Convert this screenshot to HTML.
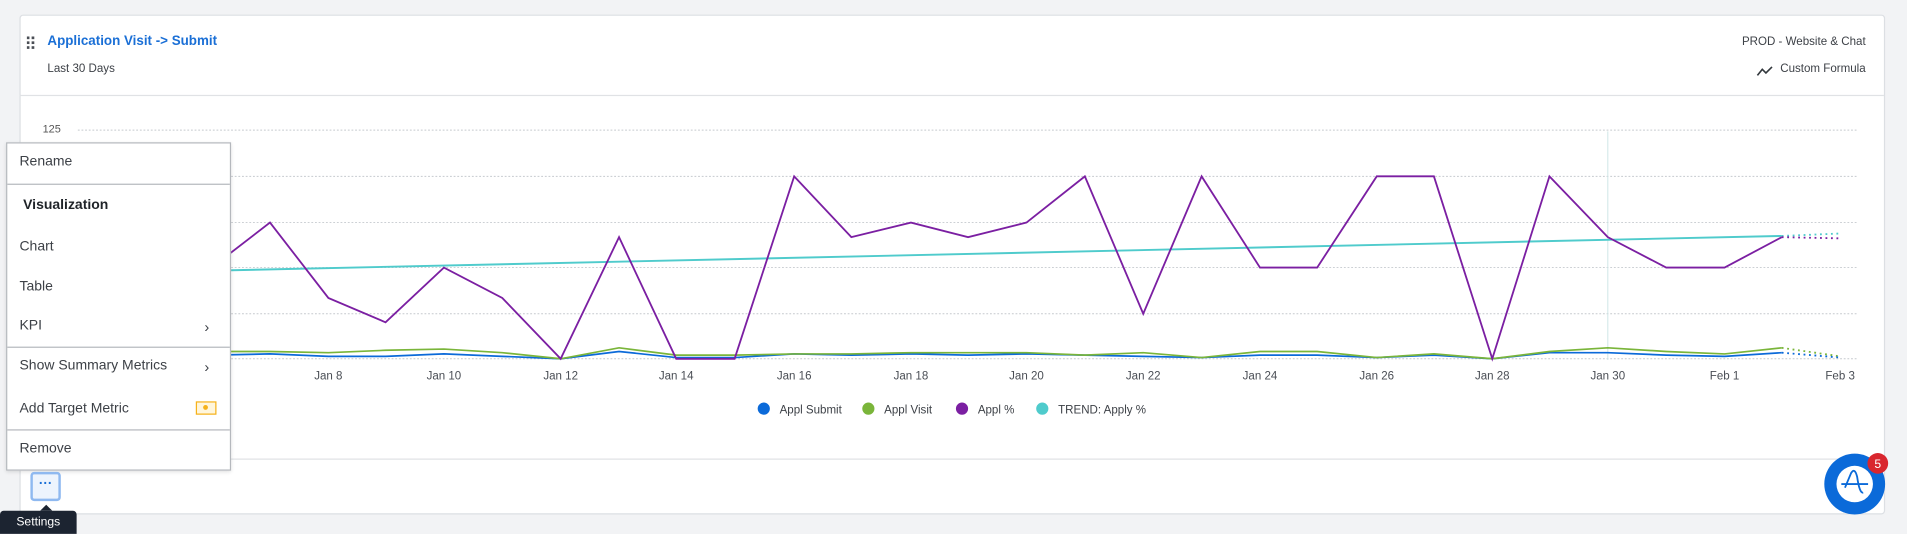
<!DOCTYPE html>
<html><head><meta charset="utf-8"><style>
html,body{margin:0;padding:0;width:1907px;height:534px;overflow:hidden;background:#f2f3f5;}
#w{position:absolute;left:0;top:0;width:1568px;height:439px;transform:scale(1.21620);transform-origin:0 0;font-family:"Liberation Sans",sans-serif;color:#33383d;}
.a{position:absolute;white-space:nowrap;}
.card{position:absolute;left:16px;top:12px;width:1532px;height:409px;background:#fff;border:1px solid #dcdfe3;border-radius:3px;}
.menu{position:absolute;left:5px;top:117px;width:183px;height:268px;background:#fff;border:1px solid #b5b8bd;box-shadow:0 1px 3px rgba(0,0,0,.12);font-size:11.5px;color:#3d4147;}
.menu .d{position:absolute;left:0;right:0;height:1px;background:#b5b8bd;}
.menu .t{position:absolute;left:10px;}
.chev{position:absolute;left:162px;font-size:12px;}
</style></head><body><div id="w">
<div class="card"></div>
<div class="a" style="left:16px;top:78px;width:1533px;height:1px;background:#e0e2e5"></div>
<div class="a" style="left:16px;top:377px;width:1533px;height:1px;background:#e0e2e5"></div>
<svg class="a" style="left:22px;top:29px" width="8" height="12"><g fill="#4a4e55"><rect x="0" y="1" width="2.2" height="2.2"/><rect x="4" y="1" width="2.2" height="2.2"/><rect x="0" y="5" width="2.2" height="2.2"/><rect x="4" y="5" width="2.2" height="2.2"/><rect x="0" y="9" width="2.2" height="2.2"/><rect x="4" y="9" width="2.2" height="2.2"/></g></svg>
<div class="a" style="left:39px;top:28px;font-size:11px;font-weight:bold;color:#1a6fd6">Application Visit -&gt; Submit</div>
<div class="a" style="left:39px;top:51px;font-size:9.5px;color:#3d4147">Last 30 Days</div>
<div class="a" style="right:34px;top:29px;font-size:9.5px;color:#3d4147">PROD - Website &amp; Chat</div>
<div class="a" style="right:34px;top:51px;font-size:9.5px;color:#3d4147">Custom Formula</div>
<svg class="a" style="left:1444px;top:53px" width="14" height="10"><path d="M1 9 L5 4 L8 7 L13 2" stroke="#33383d" stroke-width="1.3" fill="none"/></svg>
<div class="a" style="left:35px;top:101px;font-size:9px;color:#555">125</div>
<svg class="a" style="left:0;top:0" width="1568" height="439">
<g stroke="#c5c9ce" stroke-width="0.8" stroke-dasharray="1.5,1.5">
<line x1="64" y1="107" x2="1527" y2="107"/><line x1="64" y1="145" x2="1527" y2="145"/><line x1="64" y1="183" x2="1527" y2="183"/><line x1="64" y1="220" x2="1527" y2="220"/><line x1="64" y1="258" x2="1527" y2="258"/><line x1="64" y1="295" x2="1527" y2="295"/>
</g>
<line x1="1322" y1="108" x2="1322" y2="296" stroke="#cfe5e6" stroke-width="0.8"/>
<polyline fill="none" stroke="#0b6ad9" stroke-width="1.4" points="126,293 174,292 222,291 270,293 317,293 365,291 413,293 461,295 509,289 556,294 604,294 653,291 700,292 749,291 796,292 844,291 892,292 940,293 988,294 1036,292 1083,292 1132,294 1179,292 1227,295 1274,290 1322,290 1370,292 1418,293 1465,290"/>
<polyline fill="none" stroke="#7ab53a" stroke-width="1.4" points="126,290 174,289 222,289 270,290 317,288 365,287 413,290 461,295 509,286 556,292 604,292 653,291 700,291 749,290 796,290 844,290 892,292 940,290 988,294 1036,289 1083,289 1132,294 1179,291 1227,295 1274,289 1322,286 1370,289 1418,291 1465,286"/>
<polyline fill="none" stroke="#4fcbcc" stroke-width="1.6" points="64,225 1465,194"/>
<polyline fill="none" stroke="#7b1fa2" stroke-width="1.5" points="126,240 174,220 222,183 270,245 317,265 365,220 413,245 461,295 509,195 556,295 604,295 653,145 700,195 749,183 796,195 844,183 892,145 940,258 988,145 1036,220 1083,220 1132,145 1179,145 1227,295 1274,145 1322,195 1370,220 1418,220 1465,195"/>
<g stroke-width="1.5" stroke-dasharray="1.5,3" fill="none">
<line x1="1465" y1="194" x2="1513" y2="192" stroke="#4fcbcc"/>
<line x1="1465" y1="195" x2="1513" y2="196" stroke="#7b1fa2"/>
<line x1="1465" y1="286" x2="1513" y2="293" stroke="#7ab53a"/>
<line x1="1465" y1="290" x2="1513" y2="294" stroke="#0b6ad9"/>
</g>
<g font-family="Liberation Sans,sans-serif" font-size="9.5" fill="#4a4e55" text-anchor="middle">
<text x="270" y="312">Jan 8</text><text x="365" y="312">Jan 10</text><text x="461" y="312">Jan 12</text><text x="556" y="312">Jan 14</text><text x="653" y="312">Jan 16</text><text x="749" y="312">Jan 18</text><text x="844" y="312">Jan 20</text><text x="940" y="312">Jan 22</text><text x="1036" y="312">Jan 24</text><text x="1132" y="312">Jan 26</text><text x="1227" y="312">Jan 28</text><text x="1322" y="312">Jan 30</text><text x="1418" y="312">Feb 1</text><text x="1513" y="312">Feb 3</text>
</g>
<g font-family="Liberation Sans,sans-serif" font-size="9.5" fill="#3d4147">
<circle cx="628" cy="336" r="5" fill="#0b6ad9"/><text x="641" y="340">Appl Submit</text>
<circle cx="714" cy="336" r="5" fill="#7ab53a"/><text x="727" y="340">Appl Visit</text>
<circle cx="791" cy="336" r="5" fill="#7b1fa2"/><text x="804" y="340">Appl %</text>
<circle cx="857" cy="336" r="5" fill="#4fcbcc"/><text x="870" y="340">TREND: Apply %</text>
</g>
<circle cx="1525" cy="398" r="25" fill="#0b6ad9"/>
<circle cx="1525" cy="398" r="15" fill="#fff"/>
<path d="M1517 401 L1522 389 Q1525 384 1527 392 Q1529 406 1532 405 M1514 398 L1536 398" stroke="#0b6ad9" stroke-width="1.5" fill="none"/>
<circle cx="1544" cy="381" r="8.5" fill="#d9262e"/>
<text x="1544" y="385" font-family="Liberation Sans,sans-serif" font-size="10" fill="#fff" text-anchor="middle">5</text>
</svg>
<div class="menu">
<div class="t" style="top:9px">Rename</div>
<div class="d" style="top:33px"></div>
<div class="t" style="top:45px;left:13px;font-weight:bold;color:#1f2328">Visualization</div>
<div class="t" style="top:79px">Chart</div>
<div class="t" style="top:112px">Table</div>
<div class="t" style="top:144px">KPI</div><div class="chev" style="top:144px">›</div>
<div class="d" style="top:167px"></div>
<div class="t" style="top:177px">Show Summary Metrics</div><div class="chev" style="top:177px">›</div>
<div class="t" style="top:212px">Add Target Metric</div>
<div style="position:absolute;left:155px;top:212px;width:17px;height:11px;border:1.5px solid #f6b21b;box-sizing:border-box;background:#fff6dc"><div style="position:absolute;left:5px;top:2px;width:4px;height:4px;border-radius:50%;background:#f6b21b"></div></div>
<div class="d" style="top:235px"></div>
<div class="t" style="top:245px">Remove</div>
</div>
<div class="a" style="left:25px;top:388px;width:25px;height:24px;border:2px solid #8fb9f0;border-radius:3px;background:#edf4fd;box-sizing:border-box;text-align:center;font-size:11px;line-height:17px;color:#1a6fd6;font-weight:bold">···</div>
<div class="a" style="left:33px;top:415px;width:0;height:0;border-left:5px solid transparent;border-right:5px solid transparent;border-bottom:5px solid #1c2431"></div>
<div class="a" style="left:0;top:420px;width:63px;height:19px;background:#1c2431;border-radius:3px 3px 0 0;color:#fff;font-size:10px;line-height:19px;text-align:center">Settings</div>
</div></body></html>
